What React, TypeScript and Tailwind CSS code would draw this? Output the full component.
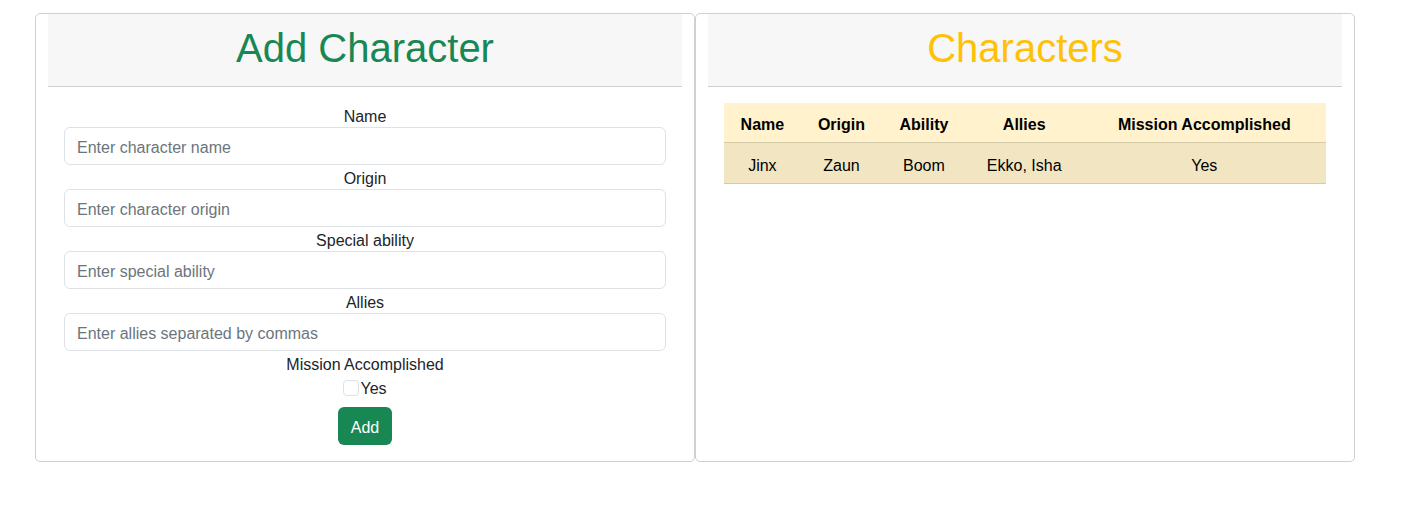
import { useState } from "react";

type Character = {
  name: string;
  origin: string;
  ability: string;
  allies: string;
  done: boolean;
};

const fields = [
  { label: "Name", placeholder: "Enter character name" },
  { label: "Origin", placeholder: "Enter character origin" },
  { label: "Special ability", placeholder: "Enter special ability" },
  { label: "Allies", placeholder: "Enter allies separated by commas" },
];

export default function App() {
  const [characters] = useState<Character[]>([
    { name: "Jinx", origin: "Zaun", ability: "Boom", allies: "Ekko, Isha", done: true },
  ]);
  const [checked, setChecked] = useState(false);

  return (
    <div className="min-h-[515px] bg-white font-['Liberation_Sans',Arial,sans-serif] text-[16px] text-[#212529]">
      <div className="ml-[35px] flex pt-[13px]">
        {/* Left – form */}
        <div className="w-[660px] rounded-[5px] border border-[#d0d0d0] px-[12px] pb-[16px]">
          <div className="border-b border-[#cfcfcf] bg-[#f7f7f7] pt-[10px] pb-[14px] text-center text-[40px] leading-[48px] text-[#198754]">
            Add Character
          </div>
          <form className="flex flex-col items-center px-[16px] pt-[16px]" onSubmit={(e) => e.preventDefault()}>
            {fields.map((f) => (
              <div key={f.label} className="flex w-full flex-col items-center">
                <label className="h-[24px] leading-[28px]">{f.label}</label>
                <input
                  placeholder={f.placeholder}
                  className="h-[38px] w-full rounded-[6px] border border-[#dee2e6] px-[12px] pt-[4px] text-[16px] placeholder:text-[#6c757d] focus:outline-none"
                />
              </div>
            ))}
            <label className="h-[24px] leading-[28px]">Mission Accomplished</label>
            <label className="flex h-[24px] items-start leading-[28px]">
              <input
                type="checkbox"
                checked={checked}
                onChange={() => setChecked(!checked)}
                className="mt-[5px] mr-[1px] h-[16px] w-[16px] appearance-none rounded-[4px] border border-[#dee2e6] bg-white"
              />
              Yes
            </label>
            <button className="mt-[8px] h-[38px] rounded-[6px] bg-[#198754] px-[13px] pt-[4px] leading-[24px] text-white">
              Add
            </button>
          </form>
        </div>

        {/* Right – table */}
        <div className="w-[660px] rounded-[5px] border border-[#d0d0d0] px-[12px]">
          <div className="border-b border-[#cfcfcf] bg-[#f7f7f7] pt-[10px] pb-[14px] text-center text-[40px] leading-[48px] text-[#ffc107]">
            Characters
          </div>
          <div className="px-[16px] pt-[16px]">
            <table className="w-full border-collapse text-center leading-[24px] text-black">
              <thead className="bg-[#fff2cd]">
                <tr className="border-b border-[#d6cba8]">
                  <th className="px-[8px] pt-[10px] pb-[5px]">Name</th>
                  <th className="px-[8px] pt-[10px] pb-[5px]">Origin</th>
                  <th className="px-[8px] pt-[10px] pb-[5px]">Ability</th>
                  <th className="px-[8px] pt-[10px] pb-[5px]">Allies</th>
                  <th className="px-[8px] pt-[10px] pb-[5px]">Mission Accomplished</th>
                </tr>
              </thead>
              <tbody className="bg-[#f2e6c2]">
                {characters.map((c) => (
                  <tr key={c.name} className="border-b border-[#d6cba8]">
                    <td className="px-[8px] pt-[11px] pb-[5px]">{c.name}</td>
                    <td className="px-[8px] pt-[11px] pb-[5px]">{c.origin}</td>
                    <td className="px-[8px] pt-[11px] pb-[5px]">{c.ability}</td>
                    <td className="px-[8px] pt-[11px] pb-[5px]">{c.allies}</td>
                    <td className="px-[8px] pt-[11px] pb-[5px]">{c.done ? "Yes" : "No"}</td>
                  </tr>
                ))}
              </tbody>
            </table>
          </div>
        </div>
      </div>
    </div>
  );
}
